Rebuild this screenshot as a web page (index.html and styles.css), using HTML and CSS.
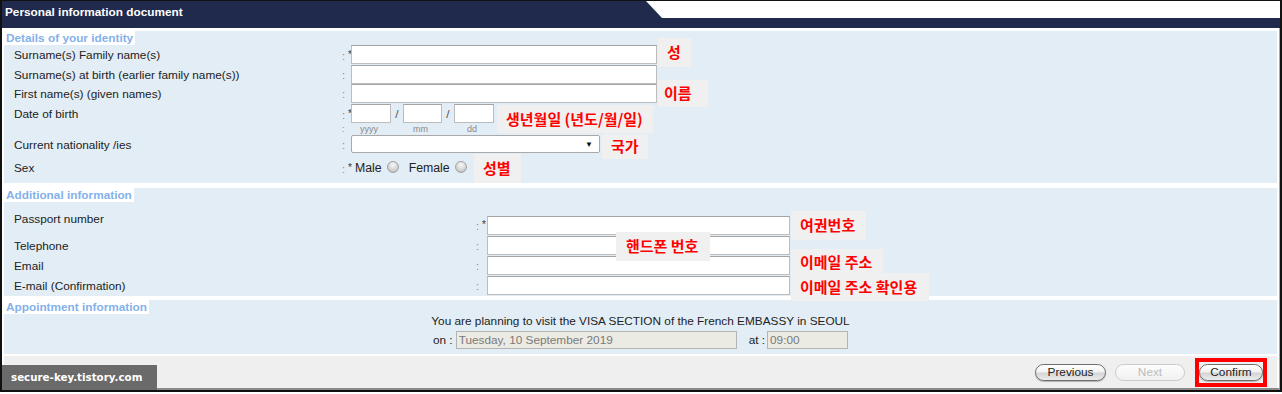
FILE: index.html
```html
<!DOCTYPE html>
<html lang="en">
<head>
<meta charset="utf-8">
<title>Personal information document</title>
<link rel="stylesheet" href="styles.css">
</head>
<body>
<div class="frame">
  <div class="header"><span class="header-title">Personal information document</span></div>
  <div class="content">
    <section class="fs fs-identity">
      <div class="legend"><span>Details of your identity</span></div>
      <div class="id-grid">
        <div class="lbl">Surname(s) Family name(s)</div>
        <div class="colon">:<b class="req">*</b></div>
        <div class="field"><input class="txt w-name" type="text"></div>

        <div class="lbl">Surname(s) at birth (earlier family name(s))</div>
        <div class="colon">:</div>
        <div class="field"><input class="txt w-name" type="text"></div>

        <div class="lbl">First name(s) (given names)</div>
        <div class="colon">:</div>
        <div class="field"><input class="txt w-name" type="text"></div>

        <div class="lbl">Date of birth</div>
        <div class="colon">:<b class="req">*</b></div>
        <div class="field date">
          <input class="txt w-y" type="text"><span class="slash">/</span><input class="txt w-m" type="text"><span class="slash">/</span><input class="txt w-y" type="text">
        </div>

        <div class="lbl"></div>
        <div class="colon colon-sub">:</div>
        <div class="field subs"><span class="sub-y">yyyy</span><span class="sub-m">mm</span><span class="sub-y">dd</span></div>

        <div class="lbl">Current nationality /ies</div>
        <div class="colon">:</div>
        <div class="field"><div class="sel"><span class="arrow">&#9660;</span></div></div>

        <div class="lbl">Sex</div>
        <div class="colon">:<b class="req">*</b></div>
        <div class="field sex">
          <span class="opt-male">Male</span><input class="radio" type="radio" name="sex">
          <span class="opt-female">Female</span><input class="radio" type="radio" name="sex">
        </div>
      </div>
    </section>

    <section class="fs fs-additional">
      <div class="legend"><span>Additional information</span></div>
      <div class="add-grid">
        <div class="lbl lbl-top">Passport number</div>
        <div class="colon colon-end">:<b class="req">*</b></div>
        <div class="field field-end"><input class="txt w-add" type="text"></div>

        <div class="lbl">Telephone</div>
        <div class="colon">:</div>
        <div class="field"><input class="txt w-add" type="text"></div>

        <div class="lbl">Email</div>
        <div class="colon">:</div>
        <div class="field"><input class="txt w-add" type="text"></div>

        <div class="lbl">E-mail (Confirmation)</div>
        <div class="colon">:</div>
        <div class="field"><input class="txt w-add" type="text"></div>
      </div>
    </section>

    <section class="fs fs-appt">
      <div class="legend"><span>Appointment information</span></div>
      <p class="visit">You are planning to visit the VISA SECTION of the French EMBASSY in SEOUL</p>
      <div class="when">
        <span class="on">on :</span><input class="dis w-date" type="text" value="Tuesday, 10 September 2019" disabled>
        <span class="at">at :</span><input class="dis w-time" type="text" value="09:00" disabled>
      </div>
    </section>

    <div class="foot">
      <button class="btn prev" type="button">Previous</button>
      <button class="btn next" type="button" disabled>Next</button>
      <span class="confirm-box"><button class="btn confirm" type="button">Confirm</button></span>
    </div>
  </div>

  <div class="notes">
    <span class="note n-sung">성</span>
    <span class="note n-name">이름</span>
    <span class="note n-dob">생년월일 (년도/월/일)</span>
    <span class="note n-nat">국가</span>
    <span class="note n-sex">성별</span>
    <span class="note n-pass">여권번호</span>
    <span class="note n-tel">핸드폰 번호</span>
    <span class="note n-email">이메일 주소</span>
    <span class="note n-email2">이메일 주소 확인용</span>
  </div>

  <div class="wm">secure-key.tistory.com</div>
</div>
</body>
</html>
```
FILE: styles.css
```css
* { box-sizing: border-box; }
html, body { margin: 0; padding: 0; background: #fff; }
body {
  font-family: "Liberation Sans", Arial, sans-serif;
  font-size: 11.8px;
  color: #222;
}

.frame {
  position: relative;
  width: 1282px;
  height: 392px;
  border: 2px solid #111;
  border-top-width: 1px;
  display: flex;
  flex-direction: column;
  overflow: hidden;
}

/* header tab */
.header {
  position: relative;
  flex: none;
  height: 27px;
  background: #1f2a4d;
  padding: 3px 0 0 3px;
}
.header-title {
  display: block;
  color: #fff;
  font-weight: bold;
  line-height: 16px;
}
.header::after {
  content: "";
  position: absolute;
  top: 0;
  left: 644px;
  right: 0;
  height: 17px;
  background: #fff;
  clip-path: polygon(0 0, 100% 0, 100% 100%, 16px 100%);
}

.content {
  flex: 1;
  display: flex;
  flex-direction: column;
  background: #fff;
  padding: 3px 2px 0 2px;
  border-right: 1px solid #a8a8a8;
  border-bottom: 2px solid #8a8a8a;
}

.fs { background: #e3edf5; }
.fs-identity { margin-bottom: 5px; padding-bottom: 2px; }
.fs-additional { margin-bottom: 4px; }
.fs-appt { margin-bottom: 2px; padding-bottom: 5px; }

.legend { height: 14px; line-height: 14px; }
.legend span {
  display: inline-block;
  height: 14px;
  background: #fff;
  color: #84b1ea;
  font-weight: bold;
  padding: 0 2px;
}

.lbl { align-self: center; line-height: 14px; }
.colon {
  align-self: center;
  color: #8a8a8a;
  font-size: 11px;
  line-height: 14px;
  white-space: nowrap;
}
.req {
  font-weight: normal;
  color: #333;
  margin-left: 3px;
  vertical-align: 2px;
  font-size: 10px;
}
.field { display: flex; align-items: center; }

.txt {
  display: block;
  margin: 0;
  height: 19px;
  border: 1px solid #bdbdbd;
  border-top-color: #a4a4a4;
  background: #fff;
  padding: 0 2px;
  font: inherit;
}
.w-name { width: 306px; }
.w-y { width: 40px; }
.w-m { width: 39px; }
.w-add { width: 303px; }

/* identity grid */
.id-grid {
  display: grid;
  grid-template-columns: 328px 9px 1fr;
  grid-template-rows: 20px 19px 20px 20px 10px 21px 26px;
  padding-left: 10px;
}
.id-grid .field { align-self: start; }
.id-grid .field.sex { align-self: center; }

.slash { width: 12px; text-align: center; color: #555; }

.subs {
  font-size: 9px;
  line-height: 10px;
  color: #8a8a8a;
}
.subs span { text-align: center; padding-right: 4px; }
.sub-y { width: 40px; }
.sub-m { width: 39px; margin: 0 12px; }
.colon-sub { font-size: 9px; line-height: 10px; }

.sel {
  width: 249px;
  height: 18px;
  margin-top: 1px;
  border: 1px solid #a9a9a9;
  border-radius: 2px;
  background: #fff;
  display: flex;
  align-items: center;
  justify-content: flex-end;
  padding-right: 6px;
}
.arrow { font-size: 8px; color: #111; }

.sex { display: flex; align-items: center; font-size: 12.3px; }
.opt-male { margin-left: 4px; }
.opt-female { margin-left: 10px; }
.radio {
  appearance: none;
  -webkit-appearance: none;
  width: 12px;
  height: 12px;
  margin: 0 0 2px 5px;
  border: 1px solid #a3a3a3;
  border-radius: 50%;
  background: radial-gradient(circle at 50% 30%, #f8f8f8 0, #dcdcdc 45%, #b3b3b3 100%);
}

/* additional grid */
.add-grid {
  display: grid;
  grid-template-columns: 462px 11px 303px;
  grid-template-rows: 34px 20px 20px 20px;
  padding-left: 10px;
}
.add-grid .field { align-self: start; }
.lbl-top { align-self: start; padding-top: 10px; }
.add-grid .field-end { align-self: end; margin-bottom: 1px; }
.colon-end { align-self: end; margin-bottom: 3px; }

/* appointment */
.visit { margin: 0; text-align: center; line-height: 15px; }
.when {
  margin-top: 2px;
  height: 18px;
  display: flex;
  justify-content: center;
  align-items: center;
}
.on { margin-right: 3px; }
.at { margin: 0 2px 0 12px; }
.dis {
  height: 18px;
  margin: 0;
  border: 1px solid #b4b4b4;
  background: #ebebe4;
  color: #7a7a7a;
  padding: 0 2px;
  font: inherit;
}
.w-date { width: 281px; }
.w-time { width: 81px; }

/* footer */
.foot {
  flex: none;
  height: 32px;
  background: #efefef;
  display: flex;
  justify-content: flex-end;
  align-items: center;
  padding-right: 10px;
}
.btn {
  height: 17px;
  margin: 0;
  padding: 0;
  border: 1px solid #6c6c6c;
  border-radius: 9px;
  background: linear-gradient(#ffffff, #f2f2f2 45%, #d5d5d5 55%, #ececec);
  box-shadow: 0 1px 1px rgba(0, 0, 0, 0.25);
  font: inherit;
  color: #222;
  line-height: 15px;
}
.prev { width: 71px; }
.next {
  width: 70px;
  margin-left: 9px;
  color: #bcbcbc;
  border-color: #cbcbcb;
  background: linear-gradient(#fdfdfd, #f1f1f1);
  box-shadow: none;
}
.confirm-box {
  display: flex;
  margin-left: 10px;
  border: 4px solid #f00;
  padding: 2px 0;
}
.confirm { width: 64px; }

/* annotations */
.notes { position: absolute; left: -2px; top: -1px; }
.note {
  position: absolute;
  display: flex;
  align-items: center;
  padding: 0 0 2px 9px;
  background: #f0f0f0;
  color: #f00;
  font-family: "Noto Sans CJK KR", sans-serif;
  font-weight: bold;
  font-size: 15px;
  line-height: 1;
  white-space: nowrap;
}
.n-sung { left: 658px; top: 38px; width: 33px; height: 29px; }
.n-name { left: 658px; top: 80px; width: 50px; height: 27px; padding-left: 6px; }
.n-dob { left: 497px; top: 105px; width: 156px; height: 28px; }
.n-nat { left: 602px; top: 134px; width: 46px; height: 25px; }
.n-sex { left: 474px; top: 154px; width: 47px; height: 29px; }
.n-pass { left: 791px; top: 211px; width: 75px; height: 29px; }
.n-tel { left: 616px; top: 232px; width: 94px; height: 29px; padding-left: 10px; }
.n-email { left: 791px; top: 249px; width: 92px; height: 26px; }
.n-email2 { left: 791px; top: 273px; width: 138px; height: 28px; }

/* watermark */
.wm {
  position: absolute;
  left: -2px;
  top: 364px;
  width: 157px;
  height: 25px;
  padding-left: 11px;
  background: #6a6a6a;
  color: #fff;
  font-family: "DejaVu Sans", sans-serif;
  font-weight: bold;
  font-size: 10.3px;
  line-height: 25px;
}
```
